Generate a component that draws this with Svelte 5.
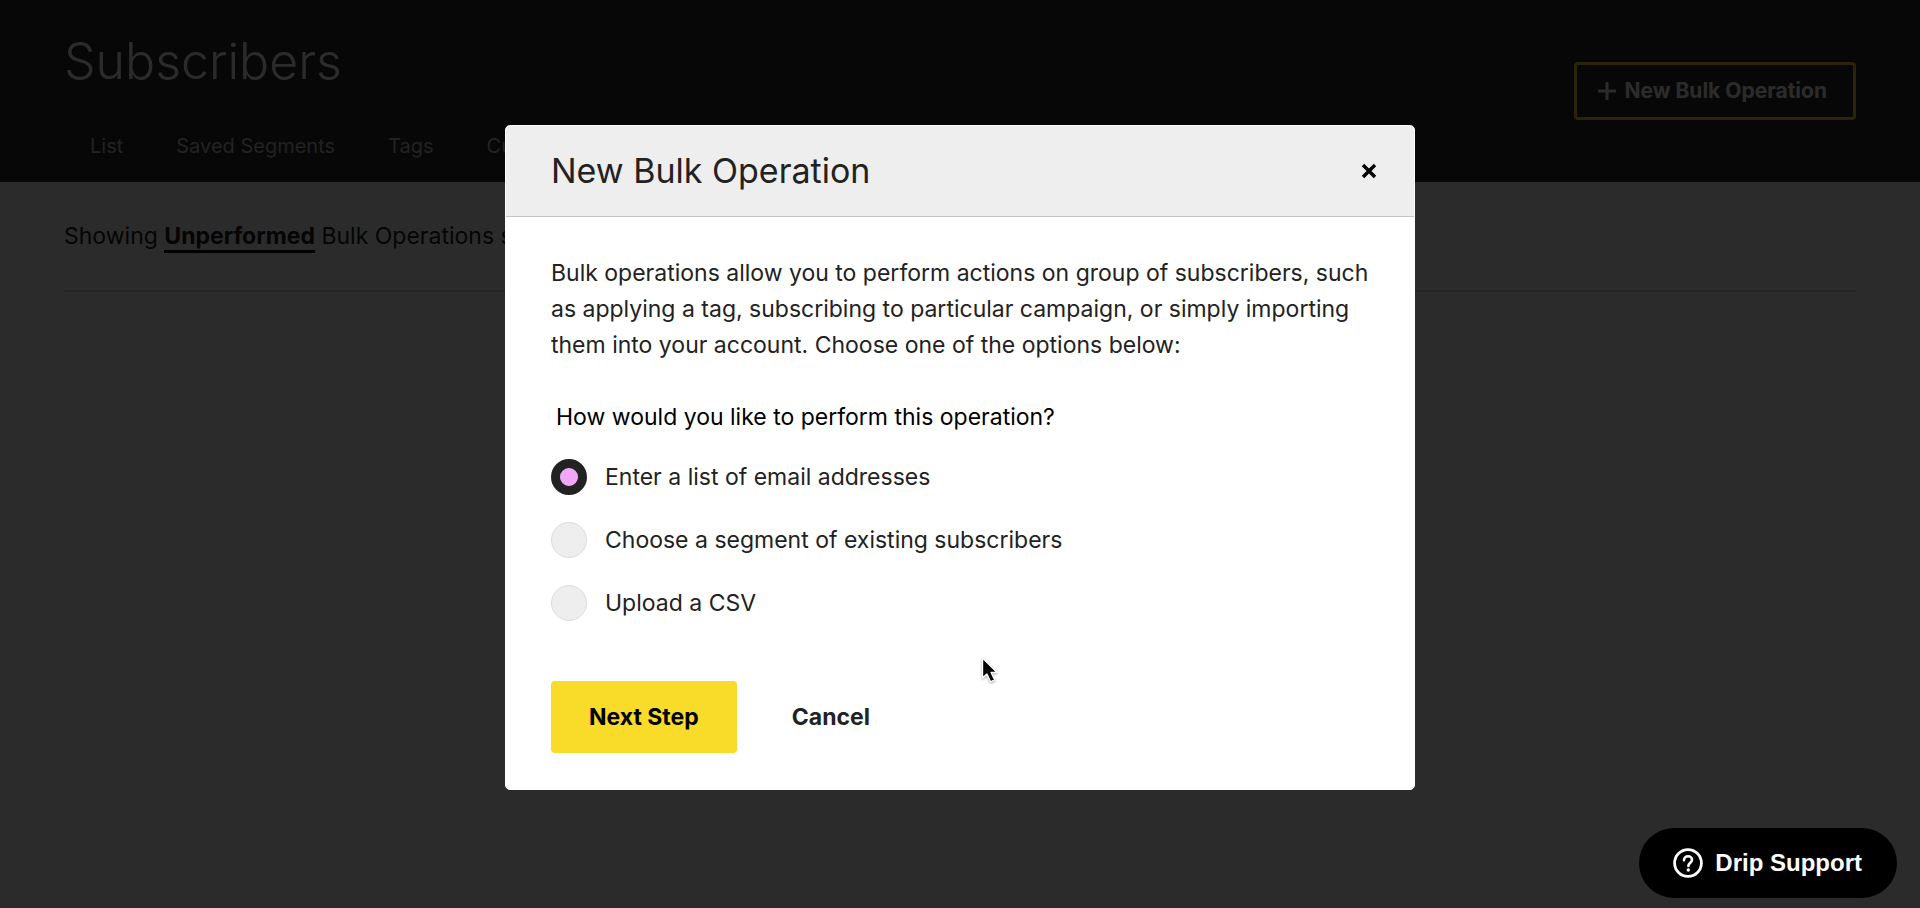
<script>
  const tabs = ['List', 'Saved Segments', 'Tags', 'Custom Fields'];
  const options = [
    { value: 'emails', label: 'Enter a list of email addresses' },
    { value: 'segment', label: 'Choose a segment of existing subscribers' },
    { value: 'csv', label: 'Upload a CSV' }
  ];
  let method = $state('emails');
</script>

<div class="page">
  <header class="masthead">
    <div>
      <h1>Subscribers</h1>
      <nav aria-label="Subscribers">
        <ul>
          {#each tabs as tab}
            <li><a href="#top">{tab}</a></li>
          {/each}
        </ul>
      </nav>
    </div>
    <button class="outline" type="button">
      <svg width="18" height="18" viewBox="0 0 18 18" aria-hidden="true"><path d="M9 0v18M0 9h18" stroke="currentColor" stroke-width="3" /></svg>
      New Bulk Operation
    </button>
  </header>
  <main>
    <p class="summary">Showing <a href="#filter">Unperformed</a> Bulk Operations sorted</p>
  </main>
</div>

<div class="backdrop">
  <div class="dialog" role="dialog" aria-modal="true" aria-labelledby="dialog-title">
    <div class="dialog-head">
      <h2 id="dialog-title">New Bulk Operation</h2>
      <button class="close" type="button" aria-label="Close">
        <svg width="16" height="16" viewBox="0 0 16 16" aria-hidden="true"><path d="M2 2l12 12M14 2L2 14" stroke="#000" stroke-width="3.4" /></svg>
      </button>
    </div>
    <form class="dialog-body" onsubmit={(e) => e.preventDefault()}>
      <p>Bulk operations allow you to perform actions on group of subscribers, such as applying a tag, subscribing to particular campaign, or simply importing them into your account. Choose one of the options below:</p>
      <fieldset>
        <legend>How would you like to perform this operation?</legend>
        <div class="options">
          {#each options as option}
            <label>
              <input type="radio" name="method" value={option.value} bind:group={method} />
              {option.label}
            </label>
          {/each}
        </div>
      </fieldset>
      <div class="actions">
        <button class="primary" type="submit">Next Step</button>
        <button class="plain" type="button">Cancel</button>
      </div>
    </form>
  </div>
</div>

<button class="support" type="button">
  <svg width="30" height="30" viewBox="0 0 30 30" fill="none" stroke="#fff" aria-hidden="true">
    <circle cx="15" cy="15" r="13.4" stroke-width="2.8" />
    <path d="M11 12.2c0-2.4 1.7-3.9 4-3.9s4 1.5 4 3.6c0 2.6-3.6 3-3.6 6" stroke-width="2.6" stroke-linecap="round" />
    <circle cx="15.3" cy="22" r="1.7" fill="#fff" stroke="none" />
  </svg>
  Drip Support
</button>

<svg class="pointer" width="18" height="28" viewBox="0 0 18 28" aria-hidden="true">
  <path d="M1.5 1v20l4.4-4 3.6 7.8 4.2-1.9-3.6-7.5h6z" fill="#000" stroke="#fff" stroke-width="1.4" stroke-linejoin="round" />
</svg>

<style>
  :global(body) {
    background: #fff;
    color: #222;
    font: 400 23px/36px Inter, "Liberation Sans", sans-serif;
  }
  h1, h2, p, ul, fieldset, legend {
    margin: 0;
    padding: 0;
  }
  button {
    font: inherit;
    color: inherit;
    background: none;
    border: 0;
    padding: 0;
    cursor: pointer;
  }
  .page {
    min-height: 100vh;
  }
  .masthead {
    display: flex;
    align-items: center;
    justify-content: space-between;
    padding: 0 64px;
    background: #292929;
    color: #fff;
  }
  h1 {
    margin: 31px 0 19px;
    font-size: 50px;
    font-weight: 300;
    line-height: 60px;
  }
  nav ul {
    display: flex;
    gap: 1px;
    list-style: none;
  }
  nav a {
    display: block;
    padding: 24px 26px;
    font-size: 20px;
    line-height: 24px;
    color: #c8c8c8;
    text-decoration: none;
  }
  .outline {
    display: flex;
    align-items: center;
    gap: 8px;
    padding: 14px 26px 14px 21px;
    border: 3px solid #fadc29;
    border-radius: 4px;
    font-size: 21px;
    font-weight: 700;
    line-height: 24px;
  }
  main {
    padding: 0 64px;
  }
  .summary {
    padding: 36px 0;
    border-bottom: 2px solid #d4d4d4;
  }
  .summary a {
    color: inherit;
    font-weight: 700;
    text-decoration: none;
    border-bottom: 3px solid #000;
  }
  .backdrop {
    position: fixed;
    inset: 0;
    display: flex;
    align-items: flex-start;
    justify-content: center;
    padding-top: 125px;
    background: rgb(0 0 0 / 0.83);
  }
  .dialog {
    width: 910px;
    max-width: 92vw;
    box-sizing: border-box;
    border: 1px solid #fff;
    border-radius: 5px;
    background: #fff;
    overflow: hidden;
  }
  .dialog-head {
    display: flex;
    align-items: center;
    justify-content: space-between;
    padding: 25px 37px 25px 45px;
    background: #eee;
    border-bottom: 1px solid #c4c4c4;
  }
  h2 {
    font-size: 34px;
    font-weight: 400;
    line-height: 40px;
  }
  .close {
    display: flex;
  }
  .dialog-body {
    padding: 38px 45px 36px;
  }
  fieldset {
    min-width: 0;
    margin-top: 36px;
    border: 0;
  }
  legend {
    padding: 0 5px;
    color: #000;
  }
  .options {
    display: flex;
    flex-direction: column;
    align-items: flex-start;
    gap: 27px;
    padding-top: 24px;
  }
  label {
    display: flex;
    align-items: center;
    gap: 18px;
  }
  input {
    appearance: none;
    flex: none;
    width: 36px;
    height: 36px;
    margin: 0;
    box-sizing: border-box;
    border: 1px solid #ddd;
    border-radius: 50%;
    background: #eee;
  }
  input:checked {
    border: 9px solid #222;
    background: #f3a6f7;
    background-clip: padding-box;
  }
  .actions {
    display: flex;
    gap: 55px;
    margin-top: 60px;
    font-weight: 700;
  }
  .primary {
    padding: 18px 38px;
    border-radius: 4px;
    background: #f9db29;
    color: #000;
  }
  .support {
    position: fixed;
    right: 23px;
    bottom: 10px;
    display: flex;
    align-items: center;
    gap: 12px;
    padding: 17px 35px 17px 34px;
    border-radius: 35px;
    background: #000;
    color: #fff;
    font: 700 24px/36px "Liberation Sans", Arial, sans-serif;
  }
  .pointer {
    position: fixed;
    left: 981px;
    top: 657px;
    pointer-events: none;
    filter: drop-shadow(0 1px 1px rgb(0 0 0 / 0.35));
  }
</style>
